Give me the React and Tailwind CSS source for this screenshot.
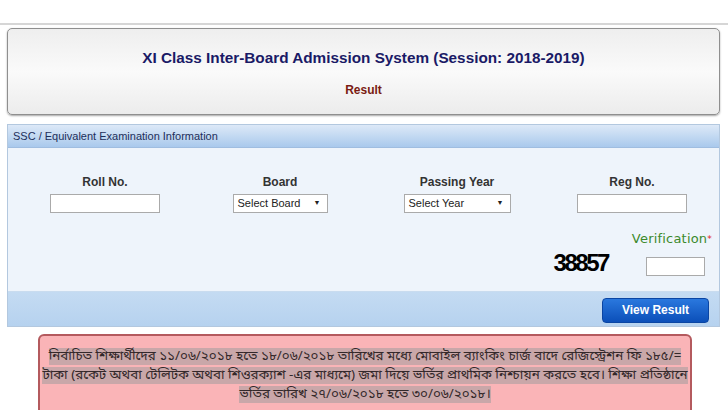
import React from 'react';

const Field = ({ label, width, children }) => (
  <div className={`flex flex-col items-center shrink-0 ${width}`}>
    <span className="text-[12px] font-bold text-[#333] leading-[14px]">{label}</span>
    <div className="mt-[5px]">{children}</div>
  </div>
);

const Select = ({ text, width }) => (
  <div className={`h-[19px] ${width} bg-white border border-[#aaa] flex items-center justify-between pl-[4px] pr-[6px] text-[11px] text-[#222]`}>
    <span>{text}</span>
    <span className="text-[7px]">▼</span>
  </div>
);

export default function App() {
  return (
    <div className="w-[728px] h-[410px] overflow-hidden bg-white font-['Liberation_Sans',Arial,sans-serif]">
      <div className="h-[25px] border-b-2 border-[#d6d6d6]" />

      <div className="mx-[7px] mt-[3px] w-[713px] h-[87px] rounded-[5px] border border-[#8f8f8f] bg-gradient-to-b from-[#eeeeee] via-[#fafafa] to-[#ececec] shadow-[0_1px_2px_rgba(0,0,0,0.35)] flex flex-col items-center">
        <h1 className="mt-[18px] text-[15.3px] font-bold text-[#1a1a66]">
          XI Class Inter-Board Admission System (Session: 2018-2019)
        </h1>
        <p className="mt-[11px] text-[12px] font-bold text-[#7a1b12]">Result</p>
      </div>

      <div className="mx-[7px] mt-[9px] w-[713px] h-[203px] border border-[#b3c8df] bg-[#eef4fb] flex flex-col">
        <div className="h-[23px] bg-gradient-to-b from-[#dde9f7] to-[#a9c9ec] border-b border-[#9fbde0] flex items-center pl-[5px] pt-[1px] text-[11px] text-[#1d2f5a]">
          SSC / Equivalent Examination Information
        </div>

        <div className="flex mt-[27px]">
          <Field label="Roll No." width="w-[194px]">
            <div className="h-[19px] w-[110px] bg-white border border-[#aaa]" />
          </Field>
          <Field label="Board" width="w-[156px]">
            <Select text="Select Board" width="w-[95px]" />
          </Field>
          <Field label="Passing Year" width="w-[198px]">
            <Select text="Select Year" width="w-[107px]" />
          </Field>
          <Field label="Reg No." width="w-[152px]">
            <div className="h-[19px] w-[110px] bg-white border border-[#aaa]" />
          </Field>
        </div>

        <div className="flex justify-end items-end mt-[18px] pr-[7px]">
          <span className="mr-[24px] mb-[1px] text-[24px] font-bold text-black tracking-[-2.5px] leading-[24px]">
            38857
          </span>
          <div className="flex flex-col items-end">
            <span className="text-[13px] text-[#3c8a2c] font-['DejaVu_Sans',sans-serif] leading-[16px] tracking-[0.2px]">
              Verification<span className="text-[#d22] text-[9px] align-top">*</span>
            </span>
            <div className="mt-[10px] mr-[7px] h-[19px] w-[59px] bg-white border border-[#aaa]" />
          </div>
        </div>

        <div className="mt-auto h-[35px] bg-gradient-to-b from-[#c4dbf2] to-[#b6d2ef] border-t border-[#c9dcef] flex items-center justify-end pr-[10px]">
          <button className="mt-[2px] h-[25px] w-[107px] rounded-[4px] bg-gradient-to-b from-[#2a78de] to-[#0b4fb9] border border-[#0a45a3] text-white text-[12px] font-bold">
            View Result
          </button>
        </div>
      </div>

      <div className="mx-[38px] mt-[7px] w-[654px] h-[90px] rounded-[6px] border-2 border-[#b45a5e] bg-[#fab4b7] pt-[11px] text-center whitespace-nowrap text-[13.4px] leading-[19px] text-[#33282a] font-['Noto_Sans_Bengali','Noto_Sans','DejaVu_Sans',sans-serif]">
        <span className="bg-[#c9a7a9]">
          নির্বাচিত শিক্ষার্থীদের ১১/০৬/২০১৮ হতে ১৮/০৬/২০১৮ তারিখের মধ্যে মোবাইল ব্যাংকিং চার্জ বাদে রেজিস্ট্রেশন ফি ১৮৫/=
          <br />
          টাকা (রকেট অথবা টেলিটক অথবা শিওরক্যাশ -এর মাধ্যমে) জমা দিয়ে ভর্তির প্রাথমিক নিশ্চায়ন করতে হবে। শিক্ষা প্রতিষ্ঠানে
          <br />
          ভর্তির তারিখ ২৭/০৬/২০১৮ হতে ৩০/০৬/২০১৮।
        </span>
      </div>
    </div>
  );
}
